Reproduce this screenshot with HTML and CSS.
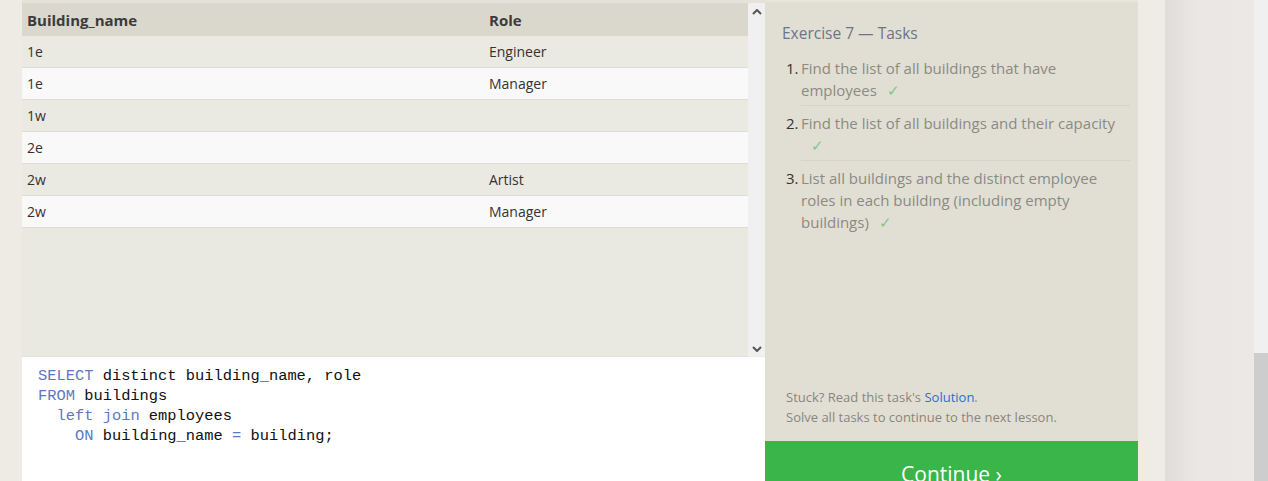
FILE: index.html
```html
<!DOCTYPE html>
<html>
<head>
<meta charset="utf-8">
<link rel="stylesheet" href="styles.css">
</head>
<body>
<div class="page">
  <div class="gutter"></div>
  <div class="workspace">
    <div class="results">
      <div class="table-wrap">
        <table class="results-table">
          <thead>
            <tr><th class="col-a">Building_name</th><th>Role</th></tr>
          </thead>
          <tbody>
            <tr><td>1e</td><td>Engineer</td></tr>
            <tr><td>1e</td><td>Manager</td></tr>
            <tr><td>1w</td><td></td></tr>
            <tr><td>2e</td><td></td></tr>
            <tr><td>2w</td><td>Artist</td></tr>
            <tr><td>2w</td><td>Manager</td></tr>
          </tbody>
        </table>
      </div>
      <div class="vscroll">
        <svg class="arrow" width="10" height="6" viewBox="0 0 10 6"><path d="M1 5 L5 1 L9 5" fill="none" stroke="#555" stroke-width="2"/></svg>
        <svg class="arrow" width="10" height="6" viewBox="0 0 10 6"><path d="M1 1 L5 5 L9 1" fill="none" stroke="#555" stroke-width="2"/></svg>
      </div>
    </div>
    <div class="editor">
      <div class="code">
        <div class="line"><span class="kw">SELECT</span> distinct building_name, role</div>
        <div class="line"><span class="kw">FROM</span> buildings</div>
        <div class="line indent1"><span class="kw">left join</span> employees</div>
        <div class="line indent2"><span class="kw">ON</span> building_name <span class="kw">=</span> building;</div>
      </div>
    </div>
  </div>
  <div class="tasks">
    <div class="tasks-title">Exercise 7 — Tasks</div>
    <ol class="task-list">
      <li class="task"><span class="num">1.</span><span class="text">Find the list of all buildings that have employees<span class="check">✓</span></span></li>
      <li class="task"><span class="num">2.</span><span class="text">Find the list of all buildings and their capacity <span class="check">✓</span></span></li>
      <li class="task"><span class="num">3.</span><span class="text last">List all buildings and the distinct employee roles in each building (including empty buildings)<span class="check">✓</span></span></li>
    </ol>
    <div class="footer">
      <div>Stuck? Read this task's <span class="link">Solution</span>.</div>
      <div>Solve all tasks to continue to the next lesson.</div>
    </div>
    <div class="continue"><span>Continue ›</span></div>
  </div>
  <div class="gap"></div>
  <div class="shade"></div>
  <div class="page-scroll"><div class="thumb"></div></div>
</div>
</body>
</html>
```

FILE: styles.css
```css
html, body {
  margin: 0;
  padding: 0;
  height: 481px;
  overflow: hidden;
  background: #efece5;
  font-family: "Open Sans", "Noto Sans", sans-serif;
}

.page {
  display: flex;
  height: 481px;
}

.gutter {
  width: 22px;
  flex-shrink: 0;
  background: #eeebe4;
}

.workspace {
  width: 743px;
  flex-shrink: 0;
  display: flex;
  flex-direction: column;
}

.results {
  height: 357px;
  display: flex;
  border-top: 3px solid #e4e2d9;
  box-sizing: border-box;
}

.table-wrap {
  width: 726px;
  background: #e9e8e1;
  border-bottom: 1px solid #e2e1da;
}

.results-table {
  width: 100%;
  border-collapse: collapse;
  font-size: 14px;
  color: #333;
}

.results-table th {
  background: #dad8cd;
  text-align: left;
  font-weight: 700;
  font-size: 15px;
  height: 33px;
  padding: 0 5px;
  color: #3b3b3b;
}

.results-table th.col-a {
  width: 452px;
}

.results-table td {
  height: 31px;
  padding: 0 5px;
  border-bottom: 1px solid #dedcd5;
}

.results-table tbody tr:nth-child(odd) td {
  background: #eae9e2;
}

.results-table tbody tr:nth-child(even) td {
  background: #f9f9f9;
}

.vscroll {
  width: 17px;
  background: #f0f0f0;
  display: flex;
  flex-direction: column;
  justify-content: space-between;
  align-items: center;
  padding: 6px 0 4px;
  box-sizing: border-box;
  height: 353px;
}

.arrow {
  display: block;
}

.editor {
  flex: 1;
  background: #fff;
}

.code {
  padding: 9px 16px;
  font-family: "Liberation Mono", "DejaVu Sans Mono", monospace;
  font-size: 15.4px;
  line-height: 20px;
  color: #111;
}

.line {
  white-space: pre;
  height: 20px;
}

.indent1 {
  padding-left: 18.5px;
}

.indent2 {
  padding-left: 37px;
}

.kw {
  color: #5b79bf;
}

.tasks {
  width: 373px;
  flex-shrink: 0;
  background: #e1dfd4;
  border-top: 2px solid #e8e6dc;
  box-sizing: border-box;
  display: flex;
  flex-direction: column;
  height: 481px;
}

.tasks-title {
  padding: 20px 0 0 17px;
  font-size: 15.5px;
  line-height: 22px;
  color: #6a7688;
}

.task-list {
  list-style: none;
  margin: 7px 8px 0 21px;
  padding: 0;
  font-size: 15px;
  line-height: 22px;
  color: #8b8a84;
}

.task {
  display: flex;
}

.num {
  width: 15px;
  flex-shrink: 0;
  color: #333;
  padding-top: 6px;
}

.text {
  flex: 1;
  padding: 6px 0 4px;
  border-bottom: 1px solid #d6d4ca;
}

.text.last {
  border-bottom: none;
}

.check {
  display: inline-block;
  margin-left: 10px;
  color: #7cc88c;
}

.footer {
  margin-top: auto;
  padding: 0 21px 14px;
  font-size: 13px;
  line-height: 20px;
  color: #8a857e;
}

.link {
  color: #2b6cd6;
}

.continue {
  height: 40px;
  flex-shrink: 0;
  background: #3ab54a;
  color: #fff;
  text-align: center;
  font-size: 21px;
  overflow: hidden;
}

.continue span {
  display: block;
  padding-top: 18px;
  line-height: 30px;
}

.gap {
  width: 27px;
  flex-shrink: 0;
  background: #efece5;
}

.shade {
  width: 89px;
  flex-shrink: 0;
  background: linear-gradient(to right, #e0dcd9, #ebe7e4 35%, #ece8e5);
}

.page-scroll {
  width: 14px;
  flex-shrink: 0;
  background: #f0f0f0;
  display: flex;
  flex-direction: column;
  justify-content: flex-end;
}

.thumb {
  height: 128px;
  background: #cdcdcd;
}
```
